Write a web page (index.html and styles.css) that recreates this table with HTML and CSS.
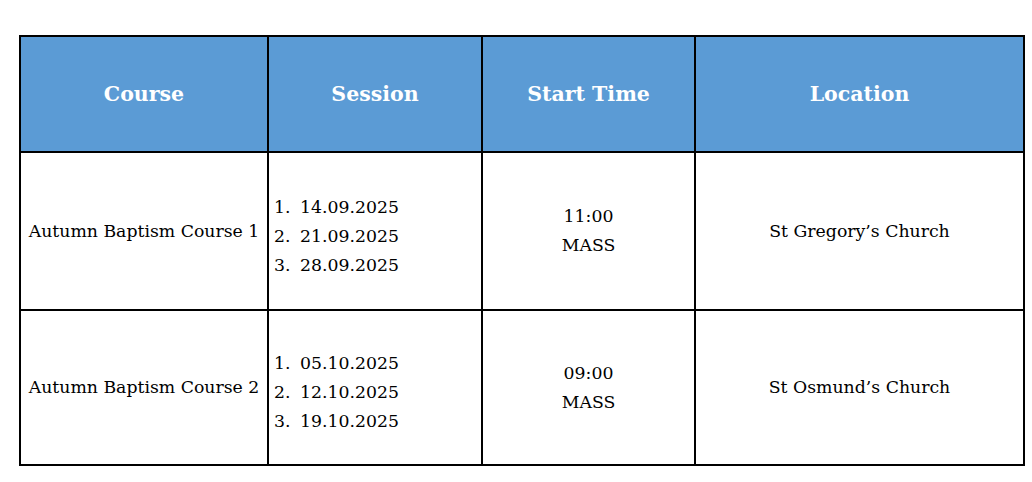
FILE: index.html
```html
<!DOCTYPE html>
<html>
<head>
<meta charset="utf-8">
<link rel="stylesheet" href="styles.css">
</head>
<body>
<table class="sched">
  <colgroup>
    <col class="c1"><col class="c2"><col class="c3"><col class="c4">
  </colgroup>
  <thead>
    <tr class="head">
      <th>Course</th><th>Session</th><th>Start Time</th><th>Location</th>
    </tr>
  </thead>
  <tbody>
    <tr class="r1">
      <td>Autumn Baptism Course 1</td>
      <td class="sess"><ol><li>14.09.2025</li><li>21.09.2025</li><li>28.09.2025</li></ol></td>
      <td class="time">11:00<br>MASS</td>
      <td>St Gregory’s Church</td>
    </tr>
    <tr class="r2">
      <td>Autumn Baptism Course 2</td>
      <td class="sess"><ol><li>05.10.2025</li><li>12.10.2025</li><li>19.10.2025</li></ol></td>
      <td class="time">09:00<br>MASS</td>
      <td>St Osmund’s Church</td>
    </tr>
  </tbody>
</table>
</body>
</html>
```
FILE: styles.css
```css
html, body { margin: 0; padding: 0; background: #fff; }
body { padding: 35px 0 0 19px; }
.sched {
  border-collapse: collapse;
  width: 1004px;
  table-layout: fixed;
  font-family: "DejaVu Serif", "Liberation Serif", serif;
  color: #000;
}
.c1 { width: 248px; }
.c2 { width: 214px; }
.c3 { width: 213px; }
.c4 { width: 329px; }
.sched th, .sched td {
  border: 2px solid #000;
  padding: 0;
  text-align: center;
  vertical-align: middle;
}
.head { height: 116px; background: #5b9bd5; }
.head th { color: #fff; font-size: 20.5px; font-weight: bold; }
.r1 { height: 158px; }
.r2 { height: 155px; }
.sched td { font-size: 17.3px; line-height: 29px; }
.sched td.sess { text-align: left; }
.sess ol { margin: 0; padding: 10px 0 0 5px; list-style: none; counter-reset: n; }
.sess li { counter-increment: n; display: flex; }
.sess li::before { content: counter(n) "."; width: 26px; }
```
